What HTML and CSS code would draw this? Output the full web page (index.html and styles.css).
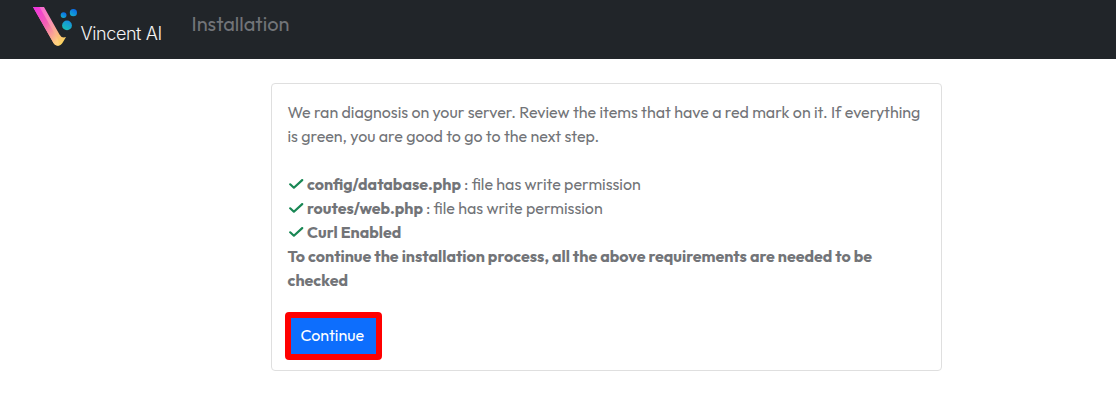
FILE: index.html
```html
<!DOCTYPE html>
<html lang="en">
<head>
<meta charset="utf-8">
<title>Vincent AI Installation</title>
<link rel="stylesheet" href="styles.css">
</head>
<body>
<header class="navbar">
  <div class="brand">
    <svg class="mark" width="46" height="42" viewBox="32 6 46 42" aria-hidden="true">
      <defs>
        <linearGradient id="stem" x1="0" y1="0" x2=".8" y2="1"><stop offset="0" stop-color="#f45fd8"/><stop offset=".5" stop-color="#fb92b4"/><stop offset="1" stop-color="#fbd55f"/></linearGradient>
        <linearGradient id="side" x1="0" y1="0" x2=".8" y2="1"><stop offset="0" stop-color="#f02fe2"/><stop offset=".5" stop-color="#f35fb4"/><stop offset="1" stop-color="#ffd17f"/></linearGradient>
        <linearGradient id="dot" x1=".8" y1="0" x2=".3" y2="1"><stop offset="0" stop-color="#168be0"/><stop offset="1" stop-color="#18c0b4"/></linearGradient>
        <linearGradient id="dot2" x1=".8" y1="0" x2=".2" y2="1"><stop offset="0" stop-color="#0965ed"/><stop offset="1" stop-color="#16b0c8"/></linearGradient>
      </defs>
      <path fill="url(#stem)" d="M33 7H44L59.500 34.500Q61.500 38.500 66 37L63.200 41.800Q61 45.800 58 45.800Q55 45.500 53.500 43Z"/>
      <path fill="url(#side)" d="M33 7H39.500L57 37.500Q59.500 42.500 58.500 45.800Q55 45.800 53.500 43Z"/>
      <circle cx="63.600" cy="15.100" r="2.900" fill="url(#dot2)"/>
      <circle cx="73.400" cy="12.700" r="3.600" fill="url(#dot2)"/>
      <circle cx="67" cy="25.400" r="4.900" fill="url(#dot)"/>
    </svg>
    <span class="brand-name">Vincent AI</span>
  </div>
  <span class="page-name">Installation</span>
</header>
<main class="card">
  <p class="line">We ran diagnosis on your server. Review the items that have a red mark on it. If everything</p>
  <p class="line">is green, you are good to go to the next step.</p>
  <ul class="checks">
    <li class="line"><svg class="tick" viewBox="0 0 15 10"><path d="M1.200 5.300 4.900 8.700 13.200 1.100"/></svg><b>config/database.php</b><span class="note">: file has write permission</span></li>
    <li class="line"><svg class="tick" viewBox="0 0 15 10"><path d="M1.200 5.300 4.900 8.700 13.200 1.100"/></svg><b>routes/web.php</b><span class="note">: file has write permission</span></li>
    <li class="line"><svg class="tick" viewBox="0 0 15 10"><path d="M1.200 5.300 4.900 8.700 13.200 1.100"/></svg><b>Curl Enabled</b></li>
  </ul>
  <p class="line"><b>To continue the installation process, all the above requirements are needed to be</b></p>
  <p class="line"><b>checked</b></p>
  <div class="highlight"><button class="continue">Continue</button></div>
</main>
</body>
</html>
```
FILE: styles.css
```css
* { box-sizing: border-box; }
body { margin: 0; background: #fff; color: #727478; font: 16px/24px "Outfit", "Lato", sans-serif; }
.navbar { height: 59px; background: #212529; display: flex; padding-left: 32px; }
.brand { display: flex; width: 159.500px; }
.mark { display: block; flex: none; margin-top: 6px; }
.brand-name { color: #f4f4f4; font-family: "Inter", sans-serif; font-size: 18px; font-weight: 300; letter-spacing: -.4px; line-height: 24px; margin: 22px 0 0 2.500px; white-space: nowrap; }
.page-name { color: #727478; font-size: 20px; line-height: 30px; margin-top: 9px; }
.card { width: 671px; height: 288px; margin: 24px 0 0 271px; padding: 16px 15.500px; border: 1px solid #dfdfdf; border-radius: 4px; }
.line { margin: 0; height: 24px; display: flex; align-items: center; white-space: nowrap; }
.checks { list-style: none; margin: 24px 0 0; padding: 0; }
.tick { width: 15px; height: 10px; margin: 0 3.500px 0 1px; fill: none; stroke: #198754; stroke-width: 2.200; stroke-linecap: round; stroke-linejoin: round; }
.note { margin-left: 3px; }
.highlight { width: 97px; height: 48px; margin: 20px 0 0 -2.500px; border: 6px solid #ff0000; border-radius: 4px; background: #0d6efd; }
.continue { display: block; width: 100%; height: 100%; padding: 0 0 2px 9.500px; border: 0; background: #0d6efd; color: #fff; text-align: left; font: inherit; }
```
